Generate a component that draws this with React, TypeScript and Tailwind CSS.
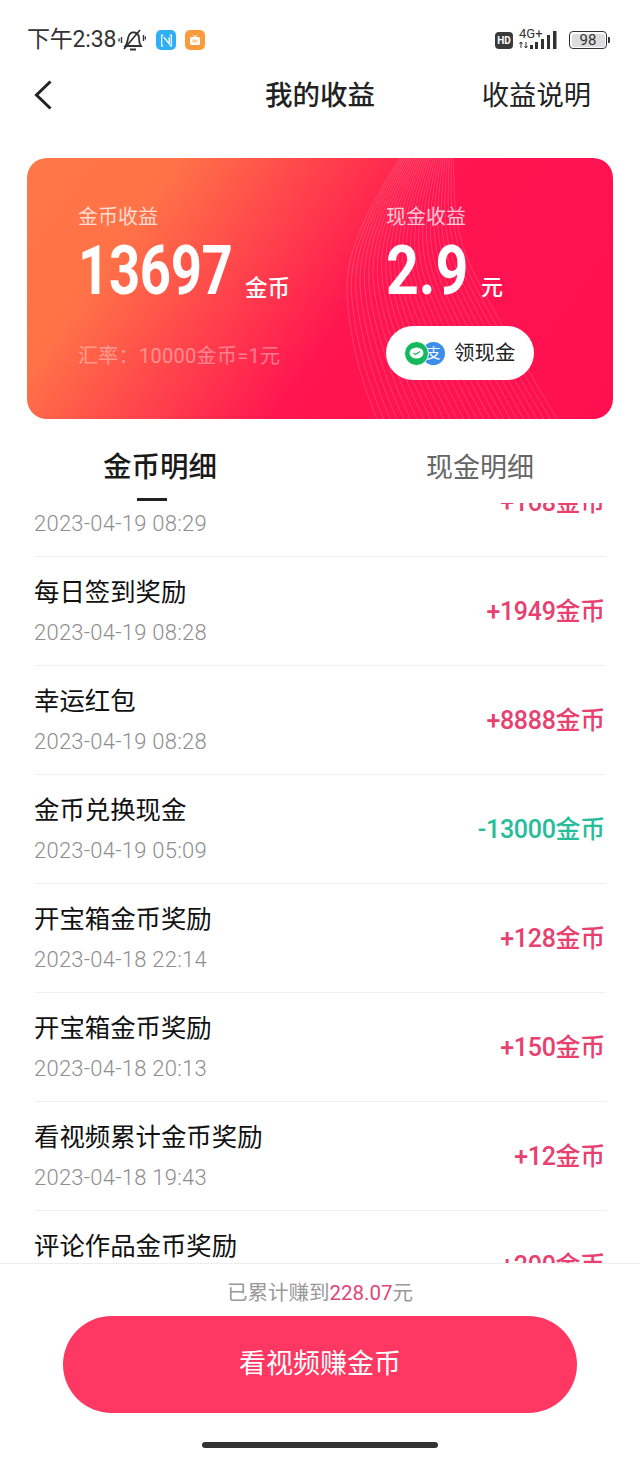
const font = "font-['Roboto','Noto_Sans_CJK_SC',sans-serif]";

type Row = { title: string; time: string; amount: string; minus?: boolean };

const rows: Row[] = [
  { title: '开宝箱金币奖励', time: '2023-04-19 08:29', amount: '+168金币' },
  { title: '每日签到奖励', time: '2023-04-19 08:28', amount: '+1949金币' },
  { title: '幸运红包', time: '2023-04-19 08:28', amount: '+8888金币' },
  { title: '金币兑换现金', time: '2023-04-19 05:09', amount: '-13000金币', minus: true },
  { title: '开宝箱金币奖励', time: '2023-04-18 22:14', amount: '+128金币' },
  { title: '开宝箱金币奖励', time: '2023-04-18 20:13', amount: '+150金币' },
  { title: '看视频累计金币奖励', time: '2023-04-18 19:43', amount: '+12金币' },
  { title: '评论作品金币奖励', time: '2023-04-18 19:40', amount: '+200金币' },
];

const StatusBar = () => (
  <div className="mt-[26px] h-[28px] mb-[14px] pl-[27px] pr-[30px] flex items-center text-[#333]">
    <span className="text-[23px] leading-[28px] tracking-[-0.2px]">下午2:38</span>
    {/* 静音 */}
    <svg width="28" height="24" viewBox="0 0 28 24" fill="none" stroke="#333" strokeWidth="1.800" className="ml-[2px]">
      <path d="M7.500 18c2-2 2-7 3-9.500 1-3 3.500-4.500 6-4 3 .6 4.500 3 4.500 6 0 3 .5 5.500 2 7.500H7.500z" />
      <path d="M12 21.500h6" strokeWidth="2" />
      <path d="M6 21L22 2" />
      <path d="M3.500 9v6M1 10.500v3M25.500 7v6M27.500 8.500v3" strokeWidth="1.400" />
    </svg>
    {/* NFC */}
    <div className="ml-[10px] w-[20px] h-[20px] rounded-[5px] bg-[#2FB0F5] flex items-center justify-center">
      <svg width="13" height="13" viewBox="0 0 12 12" fill="none" stroke="#fff" strokeWidth="1.200">
        <path d="M3 1H1.500v10H3M9 1h1.500v10H9M3.500 3l5 6V3" />
      </svg>
    </div>
    {/* 电视 */}
    <div className="ml-[9px] w-[20px] h-[20px] rounded-[5px] bg-[#FB9B3E] flex items-center justify-center">
      <svg width="12" height="12" viewBox="0 0 12 12">
        <rect x="1" y="3" width="10" height="8" rx="1.500" fill="#fff" />
        <path d="M4 .8L6 3l2-2.200" stroke="#fff" strokeWidth="1" fill="none" />
        <rect x="3.500" y="5.500" width="5" height="3" fill="#FDCB94" />
      </svg>
    </div>
    <div className="ml-auto flex items-center">
      <div className="w-[18px] h-[17px] rounded-[4px] bg-[#3a3a3a] text-white text-[10px] leading-[17px] font-bold text-center">HD</div>
      <div className="ml-[6px] relative w-[42px] h-[20px]">
        <span className="absolute left-0 top-[-3px] text-[13px] leading-[13px] text-[#333]">4G+</span>
        <svg width="42" height="20" viewBox="0 0 42 20" className="absolute left-0 top-0" fill="#333">
          <path d="M2 12v6M0.500 14L2 12l1.500 2M7 18v-6M5.500 16L7 18l1.500-2" stroke="#333" strokeWidth="1" fill="none" />
          <rect x="11" y="15" width="3" height="4" />
          <rect x="16" y="12" width="3" height="7" />
          <rect x="22" y="9" width="3" height="10" />
          <rect x="28" y="5" width="3" height="14" />
          <rect x="34" y="1" width="3.500" height="18" />
        </svg>
      </div>
      <div className="ml-[8px] w-[38px] h-[18px] rounded-[4px] border-[1.500px] border-[#333] p-[1.500px] flex">
        <div className="w-full h-full rounded-[2px] bg-[#ddd] text-[15px] leading-[12px] text-center text-[#333]">98</div>
      </div>
      <div className="ml-[1px] w-[2px] h-[6px] rounded-r-[1px] bg-[#333]" />
    </div>
  </div>
);

const Waves = () => (
  <svg viewBox="0 0 586 261" className="absolute inset-0 w-full h-full pointer-events-none" fill="none">
    {Array.from({ length: 28 }).map((_, i) => {
      const t = i / 27;
      const lerp = (a: number, b: number) => (a + (b - a) * t).toFixed(1);
      const d = `M${lerp(373, 426)} 0 C${lerp(345, 428)} ${lerp(45, 30)} ${lerp(318, 425)} ${lerp(90, 60)} ${lerp(320, 440)} ${lerp(135, 100)} C${lerp(322, 455)} ${lerp(180, 135)} ${lerp(335, 500)} ${lerp(225, 210)} ${lerp(350, 530)} 261`;
      return <path key={i} d={d} stroke="#fff" strokeOpacity={0.24} strokeWidth="0.7" />;
    })}
  </svg>
);

const EarningsCard = () => (
  <div className="relative mx-[27px] mt-[36px] h-[261px] rounded-[20px] overflow-hidden bg-[linear-gradient(125deg,#FF7748_0%,#FF7247_20%,#FF1550_56%,#FF0F4F_100%)] flex pl-[51px] text-white">
    <Waves />
    <div className="relative w-[309px] pt-[46px]">
      <div className="text-[20px] leading-[26px] text-white/75">金币收益</div>
      <div className="mt-[10px] h-[62px] flex items-end">
        <span className="inline-block w-[167px] text-[69px] leading-[62px] font-bold origin-left scale-x-[0.79] tracking-[-0.5px]">13697</span>
        <span className="text-[22.500px] leading-[28px] font-medium">金币</span>
      </div>
      <div className="mt-[40px] text-[20px] leading-[28px] text-white/40 tracking-[0.3px]">汇率：10000金币=1元</div>
    </div>
    <div className="relative pt-[46px]">
      <div className="text-[20px] leading-[26px] text-white/75 ml-[-1px]">现金收益</div>
      <div className="mt-[10px] h-[62px] flex items-end ml-[-1px]">
        <span className="inline-block w-[95px] text-[69px] leading-[62px] font-bold origin-left scale-x-[0.83]">2.9</span>
        <span className="text-[22px] leading-[28px] font-medium">元</span>
      </div>
      <div className="mt-[24px] ml-[-1px] w-[148px] h-[54px] rounded-full bg-white flex items-center pl-[18px]">
        <div className="relative w-[41px] h-[25px]">
          <div className="absolute right-0 top-[1px] w-[23px] h-[23px] rounded-full bg-[#3D8EEB] text-white text-[14px] leading-[23px] text-center">支</div>
          <div className="absolute left-0 top-0 w-[25px] h-[25px] rounded-full bg-[#13B95C] border-[1.500px] border-white flex items-center justify-center">
            <svg width="15" height="13" viewBox="0 0 15 13">
              <ellipse cx="7.500" cy="6" rx="7" ry="5.500" fill="#fff" />
              <path d="M4.500 6l2 1.500L11 4.500" stroke="#13B95C" strokeWidth="1.300" fill="none" />
            </svg>
          </div>
        </div>
        <span className="ml-[9px] text-[20.500px] leading-[28px] text-[#222]">领现金</span>
      </div>
    </div>
  </div>
);

const Tabs = () => (
  <div className="relative z-10 h-[84px] bg-white flex">
    <div className="w-[320px] flex flex-col items-center">
      <div className="mt-[30px] text-[28.500px] leading-[38px] font-medium text-[#1a1a1a]">金币明细</div>
      <div className="mt-[11px] ml-[-16px] w-[30px] h-[3px] bg-[#222]" />
    </div>
    <div className="w-[320px]">
      <div className="mt-[30px] text-center text-[27px] leading-[38px] text-[#666]">现金明细</div>
    </div>
  </div>
);

const List = () => (
  <div className="flex-1 min-h-0 overflow-hidden">
    <div className="mt-[-55px] px-[35px] pr-[34px]">
      {rows.map((r, i) => (
        <div key={i} className="h-[109px] border-b border-[#f0f0f0] flex items-center justify-between">
          <div>
            <div className="mt-[1px] text-[25.400px] leading-[32px] text-[#111] ml-[-1px]">{r.title}</div>
            <div className="mt-[11px] text-[22px] leading-[28px] font-light text-[#8e8e8e] tracking-[0.25px] ml-[-1px]">{r.time}</div>
          </div>
          <div className={`mt-[2px] text-[25px] leading-[32px] font-medium mr-[1px] tracking-[-0.3px] ${r.minus ? 'text-[#27BD98]' : 'text-[#E8406F]'}`}>
            {r.amount}
          </div>
        </div>
      ))}
    </div>
  </div>
);

const Footer = () => (
  <div className="h-[195px] shrink-0 bg-white border-t border-[#eeeeee] flex flex-col items-center">
    <div className="mt-[16px] text-[20.500px] leading-[26px] text-[#999]">
      已累计赚到<span className="text-[#E0457A]">228.07</span>元
    </div>
    <div className="mt-[10px] w-[514px] h-[97px] rounded-full bg-[#FF3763] text-white text-[27px] flex items-center justify-center">
      看视频赚金币
    </div>
    <div className="mt-[29px] w-[236px] h-[6px] rounded-full bg-[#333]" />
  </div>
);

const App = () => {
  return (
    <div className={`${font} w-[640px] h-[1458px] bg-white overflow-hidden flex flex-col`}>
      <StatusBar />
      <div className="h-[54px] shrink-0 flex items-center justify-between relative pr-[49px] pl-[34px]">
        <svg width="19" height="30" viewBox="0 0 19 30" fill="none" stroke="#222" strokeWidth="3">
          <path d="M16.500 1.500L2.500 15l14 13.500" />
        </svg>
        <span className="absolute left-[265px] top-[10px] text-[27.500px] leading-[36px] font-medium text-[#222]">我的收益</span>
        <span className="mt-[2px] text-[27.300px] leading-[36px] text-[#222]">收益说明</span>
      </div>
      <EarningsCard />
      <Tabs />
      <List />
      <Footer />
    </div>
  );
};

export default App;
